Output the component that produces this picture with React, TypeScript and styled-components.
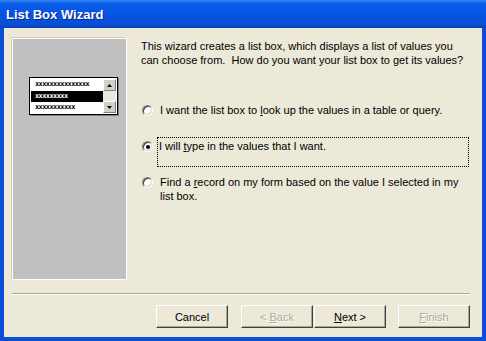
import React from "react";
import styled, { createGlobalStyle } from "styled-components";

const Global = createGlobalStyle`
  html, body { margin: 0; padding: 0; background: #ffffff; }
  body { font-family: "Liberation Sans", Arial, sans-serif; }
`;

const Window = styled.div`
  width: 486px;
  height: 341px;
  display: flex;
  flex-direction: column;
  background: #0a4fd6;
  box-sizing: border-box;
  overflow: hidden;
`;

const TitleBar = styled.div`
  height: 28px;
  flex: none;
  display: flex;
  align-items: center;
  padding-left: 6px;
  background: linear-gradient(180deg, #3a8cf6 0%, #0a5ee8 12%, #0554e2 50%, #0a4fd6 85%, #0842b8 100%);
  color: #ffffff;
  font-family: "Liberation Sans", Arial, sans-serif;
  font-weight: bold;
  font-size: 13px;
  text-shadow: 1px 1px 0 #0a2a8a;
`;

const Client = styled.div`
  flex: 1;
  margin: 0 4px 4px 4px;
  background: #ece9d8;
  display: flex;
  flex-direction: column;
  padding: 10px 12px 0 8px;
  font-family: "Liberation Sans", Arial, sans-serif;
  font-size: 11px;
  color: #000;
`;

const Main = styled.div`
  display: flex;
  height: 242px;
`;

const Illustration = styled.div`
  flex: none;
  background: #c0c0c0;
  border: 1px solid #ffffff;
  box-shadow: -1px -1px 0 #d0cdbf;
  display: flex;
  align-items: flex-start;
  padding-top: 38px;
  padding-left: 16px;
  box-sizing: content-box;
  width: 97px;
  height: 202px;
`;

const MiniList = styled.div`
  width: 89px;
  height: 38px;
  background: #ffffff;
  border: 1px solid #000;
  box-shadow: 1px 1px 0 #808080;
  display: flex;
  padding: 1px;
  box-sizing: border-box;
`;

const MiniItems = styled.div`
  flex: 1;
  display: flex;
  flex-direction: column;
  justify-content: space-between;
`;

const MiniItem = styled.div<{ $sel?: boolean }>`
  height: 11px;
  background: ${(p) => (p.$sel ? "#000" : "#fff")};
  color: ${(p) => (p.$sel ? "#fff" : "#000")};
  font-family: "DejaVu Sans Mono", monospace;
  font-size: 7px;
  line-height: 11px;
  padding-left: 4px;
  letter-spacing: -0.6px;
  font-weight: bold;
  overflow: hidden;
  white-space: nowrap;
`;

const MiniScroll = styled.div`
  width: 13px;
  display: flex;
  flex-direction: column;
  justify-content: space-between;
  background: #e8e8e8;
`;

const MiniArrow = styled.div`
  height: 12px;
  background: #d4d0c8;
  border: 1px solid;
  border-color: #fff #808080 #808080 #fff;
  box-sizing: border-box;
  display: flex;
  align-items: center;
  justify-content: center;
`;

const Content = styled.div`
  flex: 1;
  padding-left: 14px;
  padding-top: 1px;
  display: flex;
  flex-direction: column;
`;

const Intro = styled.p`
  margin: 0;
  line-height: 14px;
  width: 330px;
`;

const Options = styled.div`
  margin-top: 36px;
  display: flex;
  flex-direction: column;
`;

const Option = styled.div<{ $h: number }>`
  display: flex;
  align-items: flex-start;
  height: ${(p) => p.$h}px;
`;

const Radio = styled.div<{ $on?: boolean }>`
  width: 11px;
  height: 11px;
  flex: none;
  border-radius: 50%;
  margin-top: 2px;
  margin-left: 1px;
  background: #fff;
  box-sizing: border-box;
  border: 1px solid;
  border-color: #808080 #ffffff #ffffff #808080;
  box-shadow: inset 1px 1px 0 #404040, inset -1px -1px 0 #d4d0c8;
  display: flex;
  align-items: center;
  justify-content: center;
  &::after {
    content: "";
    width: 4px;
    height: 4px;
    border-radius: 50%;
    background: ${(p) => (p.$on ? "#000" : "transparent")};
  }
`;

const Label = styled.div<{ $focus?: boolean }>`
  line-height: 14px;
  padding: 1px 1px 0 1px;
  margin-top: -2px;
  ${(p) =>
    p.$focus
      ? `border: 1px dotted #000; width: 312px; height: 30px; box-sizing: border-box; margin-left: 4px;`
      : `border: 1px solid transparent; width: 300px; margin-left: 5px;`}
`;

const U = styled.span`
  text-decoration: underline;
`;

const Separator = styled.div`
  margin-top: 13px;
  height: 0;
  border-top: 1px solid #aca899;
  border-bottom: 1px solid #ffffff;
`;

const ButtonRow = styled.div`
  margin-top: 10px;
  display: flex;
  justify-content: flex-end;
  align-items: center;
`;

const Button = styled.button<{ $disabled?: boolean; $gap?: number }>`
  width: 72px;
  height: 23px;
  margin-left: ${(p) => p.$gap ?? 0}px;
  background: #ece9d8;
  border: 1px solid;
  border-color: #ffffff #404040 #404040 #ffffff;
  box-shadow: inset -1px -1px 0 #aca899;
  font-family: "Liberation Sans", Arial, sans-serif;
  font-size: 11px;
  color: ${(p) => (p.$disabled ? "#aca899" : "#000")};
  text-shadow: ${(p) => (p.$disabled ? "1px 1px 0 #fff" : "none")};
  padding: 0;
`;

export default function App() {
  return (
    <>
      <Global />
      <Window>
        <TitleBar>List Box Wizard</TitleBar>
        <Client>
          <Main>
            <Illustration>
              <MiniList>
                <MiniItems>
                  <MiniItem>xxxxxxxxxxxxxxx</MiniItem>
                  <MiniItem $sel>xxxxxxxxx</MiniItem>
                  <MiniItem>xxxxxxxxxxx</MiniItem>
                </MiniItems>
                <MiniScroll>
                  <MiniArrow>
                    <svg width="5" height="3" viewBox="0 0 5 3"><path d="M2.5 0 L5 3 L0 3 Z" fill="#000" /></svg>
                  </MiniArrow>
                  <MiniArrow>
                    <svg width="5" height="3" viewBox="0 0 5 3"><path d="M0 0 L5 0 L2.5 3 Z" fill="#000" /></svg>
                  </MiniArrow>
                </MiniScroll>
              </MiniList>
            </Illustration>
            <Content>
              <Intro>
                This wizard creates a list box, which displays a list of values you can choose from.&nbsp; How do you want your list box to get its values?
              </Intro>
              <Options>
                <Option $h={36}>
                  <Radio />
                  <Label>
                    I want the list box to <U>l</U>ook up the values in a table or query.
                  </Label>
                </Option>
                <Option $h={36}>
                  <Radio $on />
                  <Label $focus>
                    I will <U>t</U>ype in the values that I want.
                  </Label>
                </Option>
                <Option $h={36}>
                  <Radio />
                  <Label>
                    Find a <U>r</U>ecord on my form based on the value I selected in my list box.
                  </Label>
                </Option>
              </Options>
            </Content>
          </Main>
          <Separator />
          <ButtonRow>
            <Button>Cancel</Button>
            <Button $disabled $gap={13}>
              &lt; <U>B</U>ack
            </Button>
            <Button $gap={1}>
              <U>N</U>ext &gt;
            </Button>
            <Button $disabled $gap={12}>
              <U>F</U>inish
            </Button>
          </ButtonRow>
        </Client>
      </Window>
    </>
  );
}
